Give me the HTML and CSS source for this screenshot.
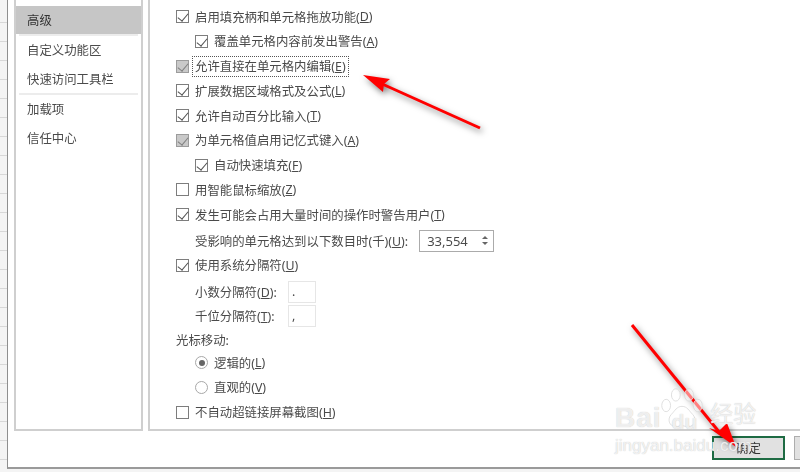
FILE: index.html

```html
<!DOCTYPE html>
<html lang="zh-CN">
<head>
    <meta charset="UTF-8">
    <title>Excel 选项</title>
    <link rel="stylesheet" href="styles.css">
</head>
<body>

<div class="sheet">
    <div class="dialog">
        <div class="dialog-body">
            <ul class="sidebar">
                <li class="active">高级</li>
                <li class="sep"></li>
                <li>自定义功能区</li>
                <li>快速访问工具栏</li>
                <li class="sep"></li>
                <li>加载项</li>
                <li>信任中心</li>
            </ul>
            <div class="panel">
                <div class="row"><span class="box checked"></span>启用填充柄和单元格拖放功能(<u>D</u>)</div>
                <div class="row sub"><span class="box checked"></span>覆盖单元格内容前发出警告(<u>A</u>)</div>
                <div class="row"><span class="box checked grey"></span><span class="focus">允许直接在单元格内编辑(<u>E</u>)</span></div>
                <div class="row"><span class="box checked"></span>扩展数据区域格式及公式(<u>L</u>)</div>
                <div class="row"><span class="box checked"></span>允许自动百分比输入(<u>T</u>)</div>
                <div class="row"><span class="box checked grey"></span>为单元格值启用记忆式键入(<u>A</u>)</div>
                <div class="row sub"><span class="box checked"></span>自动快速填充(<u>F</u>)</div>
                <div class="row"><span class="box"></span>用智能鼠标缩放(<u>Z</u>)</div>
                <div class="row"><span class="box checked"></span>发生可能会占用大量时间的操作时警告用户(<u>T</u>)</div>
                <div class="row sub spin-row">
                    <span class="field-label">受影响的单元格达到以下数目时(千)(<u>U</u>):</span>
                    <span class="spin">33,554<span class="spin-btns"><i class="up"></i><i class="down"></i></span></span>
                </div>
                <div class="row"><span class="box checked"></span>使用系统分隔符(<u>U</u>)</div>
                <div class="row sub sep-row first">
                    <span class="sep-label">小数分隔符(<u>D</u>):</span><span class="sep-input">.</span>
                </div>
                <div class="row sub sep-row">
                    <span class="sep-label">千位分隔符(<u>T</u>):</span><span class="sep-input">,</span>
                </div>
                <div class="row caption">光标移动:</div>
                <div class="row sub radio-first"><span class="radio on"></span>逻辑的(<u>L</u>)</div>
                <div class="row sub"><span class="radio"></span>直观的(<u>V</u>)</div>
                <div class="row"><span class="box"></span>不自动超链接屏幕截图(<u>H</u>)</div>
            </div>
        </div>
        <div class="footer">
            <button class="btn primary">确定</button>
            <button class="btn"></button>
        </div>
    </div>

    <!-- 红色箭头 -->
    <svg class="arrows" width="800" height="472" viewBox="0 0 800 472">
        <line x1="480" y1="128" x2="380" y2="83" stroke="#f00" stroke-width="3"/>
        <polygon points="363,75 390,79 384,84 383,92" fill="#f00"/>
        <line x1="632" y1="325" x2="720" y2="433" stroke="#f00" stroke-width="3"/>
        <polygon points="736,447 709,428 719,431 727,423" fill="#f00"/>
    </svg>

    <!-- 水印 -->
    <div class="watermark">
        <div class="wm-top">
            <span class="wm-bai">Bai</span>
            <svg class="wm-paw" width="44" height="44" viewBox="0 0 50 48">
                <g fill="rgba(255,255,255,.5)" stroke="#dcdcdc">
                    <ellipse cx="7" cy="20" rx="5" ry="7"/>
                    <ellipse cx="18" cy="8" rx="5" ry="7"/>
                    <ellipse cx="33" cy="8" rx="5" ry="7"/>
                    <ellipse cx="43" cy="20" rx="5" ry="7"/>
                    <path d="M25 21c-6 0-8 5-12 9-5 5-3 14 5 14 3 0 5-1 7-1s4 1 7 1c8 0 10-9 5-14-4-4-6-9-12-9z"/>
                </g>
            </svg>
            <span class="wm-du">du</span>
            <span class="wm-jy">经验</span>
        </div>
        <div class="wm-url">jingyan.baidu.com</div>
    </div>
</div>

</body>
</html>
```

FILE: styles.css

```css
*{
    margin: 0;
    padding: 0;
    box-sizing: border-box;
}
body{
    width: 800px;
    height: 472px;
    overflow: hidden;
    background: #fff;
    font-family: "Noto Sans", "Noto Sans CJK SC", sans-serif;
    font-size: 12.4px;
    color: #4a4a4a;
}
.sheet{
    position: relative;
    width: 800px;
    height: 472px;
    overflow: hidden;
    padding-left: 7px;
    background:
        repeating-linear-gradient(90deg, transparent 0, transparent 69px, #c8c8c8 69px, #c8c8c8 70px) 0 0 / 66.6px 100%,
        repeating-linear-gradient(#f4f4f4 0, #f4f4f4 18px, #d8d8d8 18px, #d8d8d8 19px) 0 4px;
}
.dialog{
    width: 880px;
    height: 469px;
    background: #fff;
    border-left: 1px solid #8f8f8f;
    border-bottom: 2px solid #9a9a9a;
    filter: blur(.3px);
}
.dialog-body{
    display: flex;
    gap: 5px;
    height: 431px;
    padding-left: 6px;
}

/* 左侧菜单 */
.sidebar{
    width: 129px;
    list-style: none;
    padding-top: 6px;
    border: 2px solid #cfcfcf;
    border-top: 0;
}
.sidebar li{
    height: 28.6px;
    line-height: 30px;
    padding-left: 11px;
}
.sidebar li.active{
    background: #c6c6c6;
    color: #333;
    height: 28px;
}
.sidebar li.sep{
    height: 2px;
    margin: 0 3px;
    background: #ececec;
}

/* 右侧选项 */
.panel{
    flex: 1;
    padding: 4.3px 0 0 26px;
    border: 2px solid #cfcfcf;
    border-top: 0;
}
.row{
    display: flex;
    align-items: center;
    height: 24.75px;
    white-space: nowrap;
}
.row.sub{
    padding-left: 19px;
}
.box{
    width: 13px;
    height: 13px;
    margin-right: 6px;
    border: 1px solid #7d7d7d;
    background: #fff;
    position: relative;
    flex: none;
}
.box.checked::after{
    content: "";
    position: absolute;
    left: 3px;
    top: 0;
    width: 5px;
    height: 9px;
    border: solid #505050;
    border-width: 0 1.5px 1.5px 0;
    transform: rotate(40deg);
}
.box.grey{
    background: #c9c9c9;
    border-color: #9c9c9c;
}
.box.grey::after{
    border-color: #7f7f7f;
}
.focus{
    margin-left: -2px;
    padding: 0 2px;
    line-height: 19px;
    outline: 1px dotted #555;
}
.spin-row{
    margin-top: 1.3px;
}
.field-label{
    margin-right: 11px;
}
.spin{
    display: flex;
    align-items: center;
    justify-content: space-between;
    width: 75px;
    height: 22px;
    padding: 0 5px 0 7px;
    border: 1px solid #ababab;
    font-size: 13px;
}
.spin-btns{
    display: flex;
    flex-direction: column;
    gap: 3px;
}
.spin-btns i{
    width: 0;
    height: 0;
    border-left: 3px solid transparent;
    border-right: 3px solid transparent;
}
.spin-btns .up{
    border-bottom: 3px solid #666;
}
.spin-btns .down{
    border-top: 3px solid #666;
}
.sep-row.first{
    margin-top: 1.5px;
}
.sep-label{
    width: 93px;
}
.sep-input{
    width: 28px;
    height: 22px;
    padding-left: 3px;
    line-height: 20px;
    border: 1px solid #e6e6e6;
}
.caption{
    height: 23px;
}
.radio-first{
    margin-top: -1.5px;
}
.radio{
    width: 13px;
    height: 13px;
    margin-right: 6px;
    border: 1px solid #a8a8a8;
    border-radius: 50%;
    position: relative;
    flex: none;
}
.radio.on::after{
    content: "";
    position: absolute;
    left: 2.5px;
    top: 2.5px;
    width: 6px;
    height: 6px;
    border-radius: 50%;
    background: #666;
}

/* 底部按钮 */
.footer{
    display: flex;
    justify-content: flex-end;
    gap: 9px;
    padding: 5px 20px 0 0;
}
.btn{
    width: 73px;
    height: 24px;
    border: 1px solid #adadad;
    background: #e1e1e1;
    font-family: inherit;
    font-size: 12.4px;
    color: #333;
}
.btn.primary{
    border: 2px solid #1e6b43;
}

/* 覆盖层 */
.arrows{
    position: absolute;
    left: 0;
    top: 0;
    filter: drop-shadow(2px 3px 3px rgba(0,0,0,.5));
}
.watermark{
    position: absolute;
    left: 615px;
    top: 385px;
    color: rgba(255,255,255,.75);
    font-family: "Liberation Sans", "Noto Sans CJK SC", sans-serif;
    text-shadow: 0 0 1px #bdbdbd;
}
.wm-top{
    display: flex;
    align-items: flex-end;
    height: 46px;
    white-space: nowrap;
}
.wm-bai{
    font-size: 28px;
    font-weight: bold;
    line-height: 34px;
    letter-spacing: 1px;
    margin-bottom: -4px;
}
.wm-paw{
    margin-left: -2px;
    margin-right: -32px;
    margin-bottom: 0;
}
.wm-du{
    font-size: 21px;
    font-weight: bold;
    line-height: 26px;
    margin-bottom: -4px;
}
.wm-jy{
    margin-left: 13px;
    font-size: 23px;
    line-height: 34px;
}
.wm-url{
    margin-top: 5px;
    font-size: 17px;
    line-height: 20px;
    white-space: nowrap;
}
```
